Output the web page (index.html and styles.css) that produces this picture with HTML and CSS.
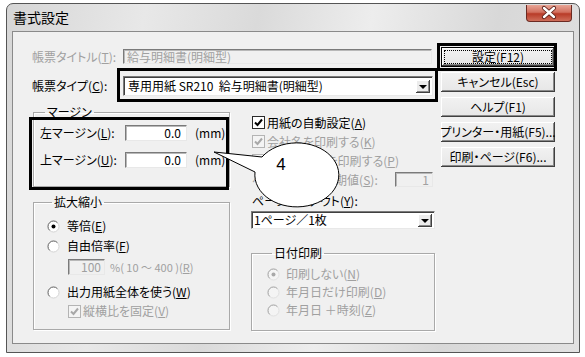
FILE: index.html
```html
<!DOCTYPE html>
<html lang="ja">
  <head>
    <meta charset="UTF-8" />
    <meta name="viewport" content="width=device-width, initial-scale=1.0" />
    <title>書式設定</title>
    <link rel="stylesheet" href="styles.css">
  </head>

  <body>
    <div class="screen">
      <div class="window">
        <div class="titlebar">
          <span class="caption">書式設定</span>
          <div class="close-btn">
            <svg width="46" height="17" viewBox="0 0 46 17">
              <path d="M18 4 L28 13 M28 4 L18 13" stroke="#5a1f17" stroke-width="4.2" stroke-linecap="round" />
              <path d="M18 4 L28 13 M28 4 L18 13" stroke="#fff" stroke-width="2.4" stroke-linecap="round" />
            </svg>
          </div>
        </div>

        <div class="client">
          <div class="form">
            <div class="row row-title">
              <span class="lbl disabled">帳票タイトル(<u>T</u>):</span>
              <div class="field field-title disabled">給与明細書(明細型)</div>
            </div>
            <div class="row row-type">
              <span class="lbl">帳票タイプ(<u>C</u>):</span>
              <div class="combo combo-type">
                <span class="combo-text">専用用紙 SR210  給与明細書(明細型)</span>
                <span class="drop"></span>
              </div>
            </div>

            <div class="columns">
              <div class="col-left">
                <fieldset class="group group-margin">
                  <legend>マージン</legend>
                  <div class="mrow">
                    <span class="mlabel">左マージン(<u>L</u>):</span>
                    <div class="field num">0.0</div>
                    <span class="unit">(mm)</span>
                  </div>
                  <div class="mrow mrow-2">
                    <span class="mlabel">上マージン(<u>U</u>):</span>
                    <div class="field num">0.0</div>
                    <span class="unit">(mm)</span>
                  </div>
                </fieldset>

                <fieldset class="group group-scale">
                  <legend>拡大縮小</legend>
                  <div class="opt opt-first">
                    <svg class="radio" width="13" height="13" viewBox="0 0 13 13">
                      <circle cx="6.5" cy="6.5" r="5.5" fill="#fff" stroke="#d4d4d4" />
                      <path d="M2.6 10.4 A5.5 5.5 0 0 1 10.4 2.6" fill="none" stroke="#6e6e6e" />
                      <circle cx="6.5" cy="6.5" r="2" fill="#000" />
                    </svg>
                    <span>等倍(<u>E</u>)</span>
                  </div>
                  <div class="opt opt-second">
                    <svg class="radio" width="13" height="13" viewBox="0 0 13 13">
                      <circle cx="6.5" cy="6.5" r="5.5" fill="#fff" stroke="#d4d4d4" />
                      <path d="M2.6 10.4 A5.5 5.5 0 0 1 10.4 2.6" fill="none" stroke="#6e6e6e" />
                    </svg>
                    <span>自由倍率(<u>F</u>)</span>
                  </div>
                  <div class="rate-row disabled">
                    <div class="field rate">100</div>
                    <span class="rate-text">%( 10 ～ 400 )(<u>R</u>)</span>
                  </div>
                  <div class="opt opt-whole">
                    <svg class="radio" width="13" height="13" viewBox="0 0 13 13">
                      <circle cx="6.5" cy="6.5" r="5.5" fill="#fff" stroke="#d4d4d4" />
                      <path d="M2.6 10.4 A5.5 5.5 0 0 1 10.4 2.6" fill="none" stroke="#6e6e6e" />
                    </svg>
                    <span>出力用紙全体を使う(<u>W</u>)</span>
                  </div>
                  <div class="opt opt-ratio disabled">
                    <svg class="check" width="13" height="13" viewBox="0 0 13 13">
                      <rect x="0.5" y="0.5" width="12" height="12" fill="#f4f4f4" stroke="#b4b4b4" />
                      <path d="M3 6.5 L5.5 9 L10 3.5" fill="none" stroke="#a8a8a8" stroke-width="2" />
                    </svg>
                    <span>縦横比を固定(<u>V</u>)</span>
                  </div>
                </fieldset>
              </div>

              <div class="col-right">
                <div class="chk-row">
                  <svg class="check" width="13" height="13" viewBox="0 0 13 13">
                    <rect x="0.5" y="0.5" width="12" height="12" fill="#fff" stroke="#2a2a2a" />
                    <path d="M3 6.5 L5.5 9 L10 3.5" fill="none" stroke="#000" stroke-width="2" />
                  </svg>
                  <span>用紙の自動設定(<u>A</u>)</span>
                </div>
                <div class="chk-row disabled">
                  <svg class="check" width="13" height="13" viewBox="0 0 13 13">
                    <rect x="0.5" y="0.5" width="12" height="12" fill="#f4f4f4" stroke="#b4b4b4" />
                    <path d="M3 6.5 L5.5 9 L10 3.5" fill="none" stroke="#a8a8a8" stroke-width="2" />
                  </svg>
                  <span>会社名を印刷する(<u>K</u>)</span>
                </div>
                <div class="chk-row disabled">
                  <svg class="check" width="13" height="13" viewBox="0 0 13 13">
                    <rect x="0.5" y="0.5" width="12" height="12" fill="#f4f4f4" stroke="#b4b4b4" />
                  </svg>
                  <span>ページ番号を印刷する(<u>P</u>)</span>
                </div>
                <div class="chk-row start-row disabled">
                  <span>ページ番号の初期値(<u>S</u>):</span>
                  <div class="field start-num">1</div>
                </div>
                <div class="layout-label">ページレイアウト(<u>Y</u>):</div>
                <div class="combo combo-layout">
                  <span class="combo-text">1ページ／1枚</span>
                  <span class="drop"></span>
                </div>

                <fieldset class="group group-date">
                  <legend>日付印刷</legend>
                  <div class="opt disabled">
                    <svg class="radio" width="13" height="13" viewBox="0 0 13 13">
                      <circle cx="6.5" cy="6.5" r="5.5" fill="#f4f4f4" stroke="#e0e0e0" />
                      <path d="M2.6 10.4 A5.5 5.5 0 0 1 10.4 2.6" fill="none" stroke="#a8a8a8" />
                      <circle cx="6.5" cy="6.5" r="2" fill="#a8a8a8" />
                    </svg>
                    <span>印刷しない(<u>N</u>)</span>
                  </div>
                  <div class="opt disabled">
                    <svg class="radio" width="13" height="13" viewBox="0 0 13 13">
                      <circle cx="6.5" cy="6.5" r="5.5" fill="#f4f4f4" stroke="#e0e0e0" />
                      <path d="M2.6 10.4 A5.5 5.5 0 0 1 10.4 2.6" fill="none" stroke="#a8a8a8" />
                    </svg>
                    <span>年月日だけ印刷(<u>D</u>)</span>
                  </div>
                  <div class="opt disabled">
                    <svg class="radio" width="13" height="13" viewBox="0 0 13 13">
                      <circle cx="6.5" cy="6.5" r="5.5" fill="#f4f4f4" stroke="#e0e0e0" />
                      <path d="M2.6 10.4 A5.5 5.5 0 0 1 10.4 2.6" fill="none" stroke="#a8a8a8" />
                    </svg>
                    <span>年月日 ＋時刻(<u>Z</u>)</span>
                  </div>
                </fieldset>
              </div>
            </div>
          </div>

          <div class="buttons">
            <div class="btn btn-default"><span class="focus">設定(F12)</span></div>
            <div class="btn">キャンセル(Esc)</div>
            <div class="btn">ヘルプ(F1)</div>
            <div class="btn">プリンター・用紙(F5)...</div>
            <div class="btn">印刷・ページ(F6)...</div>
          </div>
        </div>
      </div>

      <!-- black annotation frames -->
      <div class="mark mark-set"></div>
      <div class="mark mark-type"></div>
      <div class="mark mark-margin"></div>

      <svg class="callout" width="585" height="357" viewBox="0 0 585 357">
        <path d="M214 152 L262 157 A42 32 0 1 1 255 172 Z" fill="#fff" stroke="#000" stroke-width="1" />
        <text x="281" y="170" font-family="Liberation Sans, sans-serif" font-size="17" text-anchor="middle">4</text>
      </svg>
    </div>
  </body>
</html>
```

FILE: styles.css
```css
* {
  box-sizing: border-box;
}

body {
  margin: 0;
  background: #fff;
  font-family: "Noto Sans CJK JP", "Noto Sans", sans-serif;
  font-size: 12px;
  line-height: 14px;
  color: #000;
  font-feature-settings: "palt";
}

u {
  text-underline-offset: 1px;
}

.screen {
  position: relative;
  width: 585px;
  height: 357px;
  overflow: hidden;
  padding: 3px 0 0 6px;
}

/* window frame */
.window {
  width: 574px;
  height: 350px;
  display: flex;
  flex-direction: column;
  padding: 0 5px 8px 5px;
  border: 1px solid #555;
  border-radius: 7px 7px 0 0;
  background: linear-gradient(100deg, #d6d6d6 0%, #e8e8e8 22%, #dadada 40%, #ededed 58%, #d8d8d8 78%, #e2e2e2 100%);
}

.titlebar {
  height: 27px;
  display: flex;
  align-items: flex-start;
}

.caption {
  margin: 4px 0 0 1px;
  font-size: 14px;
  line-height: 18px;
}

.close-btn {
  margin: 1px 2px 0 auto;
  width: 46px;
  height: 17px;
  border: 1px solid #6b2a22;
  border-top: none;
  border-radius: 0 0 4px 4px;
  background: linear-gradient(#e8a596, #d2705f 45%, #b83b28 55%, #cf6e5a);
}

.close-btn svg {
  display: block;
  margin: -1px 0 0 -1px;
}

.client {
  flex: 1;
  display: flex;
  border: 1px solid #8a8a8a;
  background: #f0f0f0;
}

.disabled {
  color: #a0a0a0;
}

/* left / middle form */
.form {
  flex: 1;
  padding: 17px 0 0 19px;
}

.row {
  display: flex;
  align-items: center;
}

.row-title {
  height: 15px;
}

.row-type {
  height: 20px;
  margin-top: 12px;
}

.lbl {
  width: 91px;
  white-space: nowrap;
}

.field {
  background: #fff;
  border: 1px solid;
  border-color: #7a7a7a #e8e8e8 #e8e8e8 #7a7a7a;
  box-shadow: inset 1px 1px 0 #b8b8b8;
  white-space: nowrap;
}

.field.disabled,
.disabled .field {
  background: #f0f0f0;
}

.field-title {
  width: 309px;
  height: 15px;
  padding-left: 3px;
  line-height: 13px;
}

.combo {
  display: flex;
  align-items: center;
  background: #fff;
  border: 1px solid;
  border-color: #7a7a7a #e8e8e8 #e8e8e8 #7a7a7a;
  box-shadow: inset 1px 1px 0 #404040;
}

.combo-text {
  flex: 1;
  padding-left: 4px;
  white-space: pre;
}

.combo-type {
  width: 310px;
  height: 20px;
}

.drop {
  position: relative;
  width: 14px;
  height: 13px;
  margin-right: 2px;
  background: #ececec;
  box-shadow: inset -1px -1px 0 #404040, inset 1px 1px 0 #fff, inset -2px -2px 0 #8a8a8a;
}

.drop::after {
  content: "";
  position: absolute;
  left: 3px;
  top: 5px;
  border-left: 4px solid transparent;
  border-right: 4px solid transparent;
  border-top: 4px solid #000;
}

.columns {
  display: flex;
  margin-top: 9px;
  padding-left: 1px;
}

.col-left {
  width: 197px;
}

.col-right {
  width: 184px;
  margin-left: 21px;
  padding-top: 8px;
}

/* group boxes */
.group {
  margin: 0;
  padding: 0;
  min-width: 0;
  border: 1px solid #a9a9a9;
  box-shadow: 1px 1px 0 #fff, inset 1px 1px 0 #fff;
}

.group legend {
  margin-left: 5px;
  padding: 0 2px;
  height: 14px;
  line-height: 14px;
}

.group-margin {
  padding: 5px 0 17px 6px;
}

.mrow {
  display: flex;
  align-items: center;
  height: 18px;
}

.mrow-2 {
  margin-top: 9px;
}

.mlabel {
  width: 85px;
  white-space: nowrap;
}

.num {
  width: 62px;
  height: 16px;
  padding-right: 5px;
  text-align: right;
  line-height: 14px;
}

.unit {
  margin-left: 8px;
}

.group-scale {
  margin-top: 8px;
  padding: 8px 0 9px 13px;
}

.opt {
  display: flex;
  align-items: center;
  height: 18px;
  white-space: nowrap;
}

.radio,
.check {
  flex: none;
  margin-right: 7px;
}

.opt-second {
  margin-top: 2px;
}

.rate-row {
  display: flex;
  align-items: center;
  height: 17px;
  margin-top: 3px;
  padding-left: 21px;
}

.rate {
  width: 37px;
  height: 16px;
  padding-right: 3px;
  text-align: right;
  line-height: 14px;
}

.rate-text {
  margin-left: 5px;
  font-size: 11px;
}

.opt-whole {
  margin-top: 8px;
}

.opt-ratio {
  margin-top: 1px;
  padding-left: 21px;
}

.opt-ratio .check {
  margin-right: 2px;
}

/* middle column */
.chk-row {
  display: flex;
  align-items: center;
  height: 19px;
  padding-left: 1px;
  white-space: nowrap;
}

.chk-row .check {
  margin-right: 2px;
}

.start-num {
  width: 38px;
  height: 15px;
  margin: 0 2px 0 auto;
  padding-right: 3px;
  text-align: right;
  line-height: 13px;
}

.layout-label {
  height: 19px;
  margin-top: 2px;
  padding-left: 1px;
  line-height: 19px;
}

.combo-layout {
  height: 18px;
  margin-top: 1px;
}

.combo-layout .combo-text {
  padding-left: 2px;
}

.group-date {
  margin-top: 17px;
  padding: 5px 0 11px 15px;
}

.group-date .radio {
  margin-right: 6px;
}

/* buttons */
.buttons {
  width: 114px;
  margin-right: 18px;
  padding-top: 15px;
  display: flex;
  flex-direction: column;
  gap: 5px;
}

.btn {
  height: 20px;
  display: flex;
  align-items: center;
  justify-content: center;
  white-space: nowrap;
  background: linear-gradient(#f2f2f2, #e6e6e6);
  box-shadow: inset -1px -1px 0 #404040, inset 1px 1px 0 #fff, inset -2px -2px 0 #8a8a8a;
}

.btn-default {
  border: 1px solid #000;
  padding: 2px;
}

.focus {
  width: 100%;
  height: 100%;
  display: flex;
  align-items: center;
  justify-content: center;
  border: 1px dotted #000;
}

/* annotation overlays */
.mark {
  position: absolute;
  border: 3px solid #000;
}

.mark-set {
  left: 437px;
  top: 43px;
  width: 120px;
  height: 28px;
}

.mark-type {
  left: 117px;
  top: 68px;
  width: 321px;
  height: 34px;
}

.mark-margin {
  left: 29px;
  top: 117px;
  width: 200px;
  height: 73px;
}

.callout {
  position: absolute;
  left: 0;
  top: 0;
}
```
